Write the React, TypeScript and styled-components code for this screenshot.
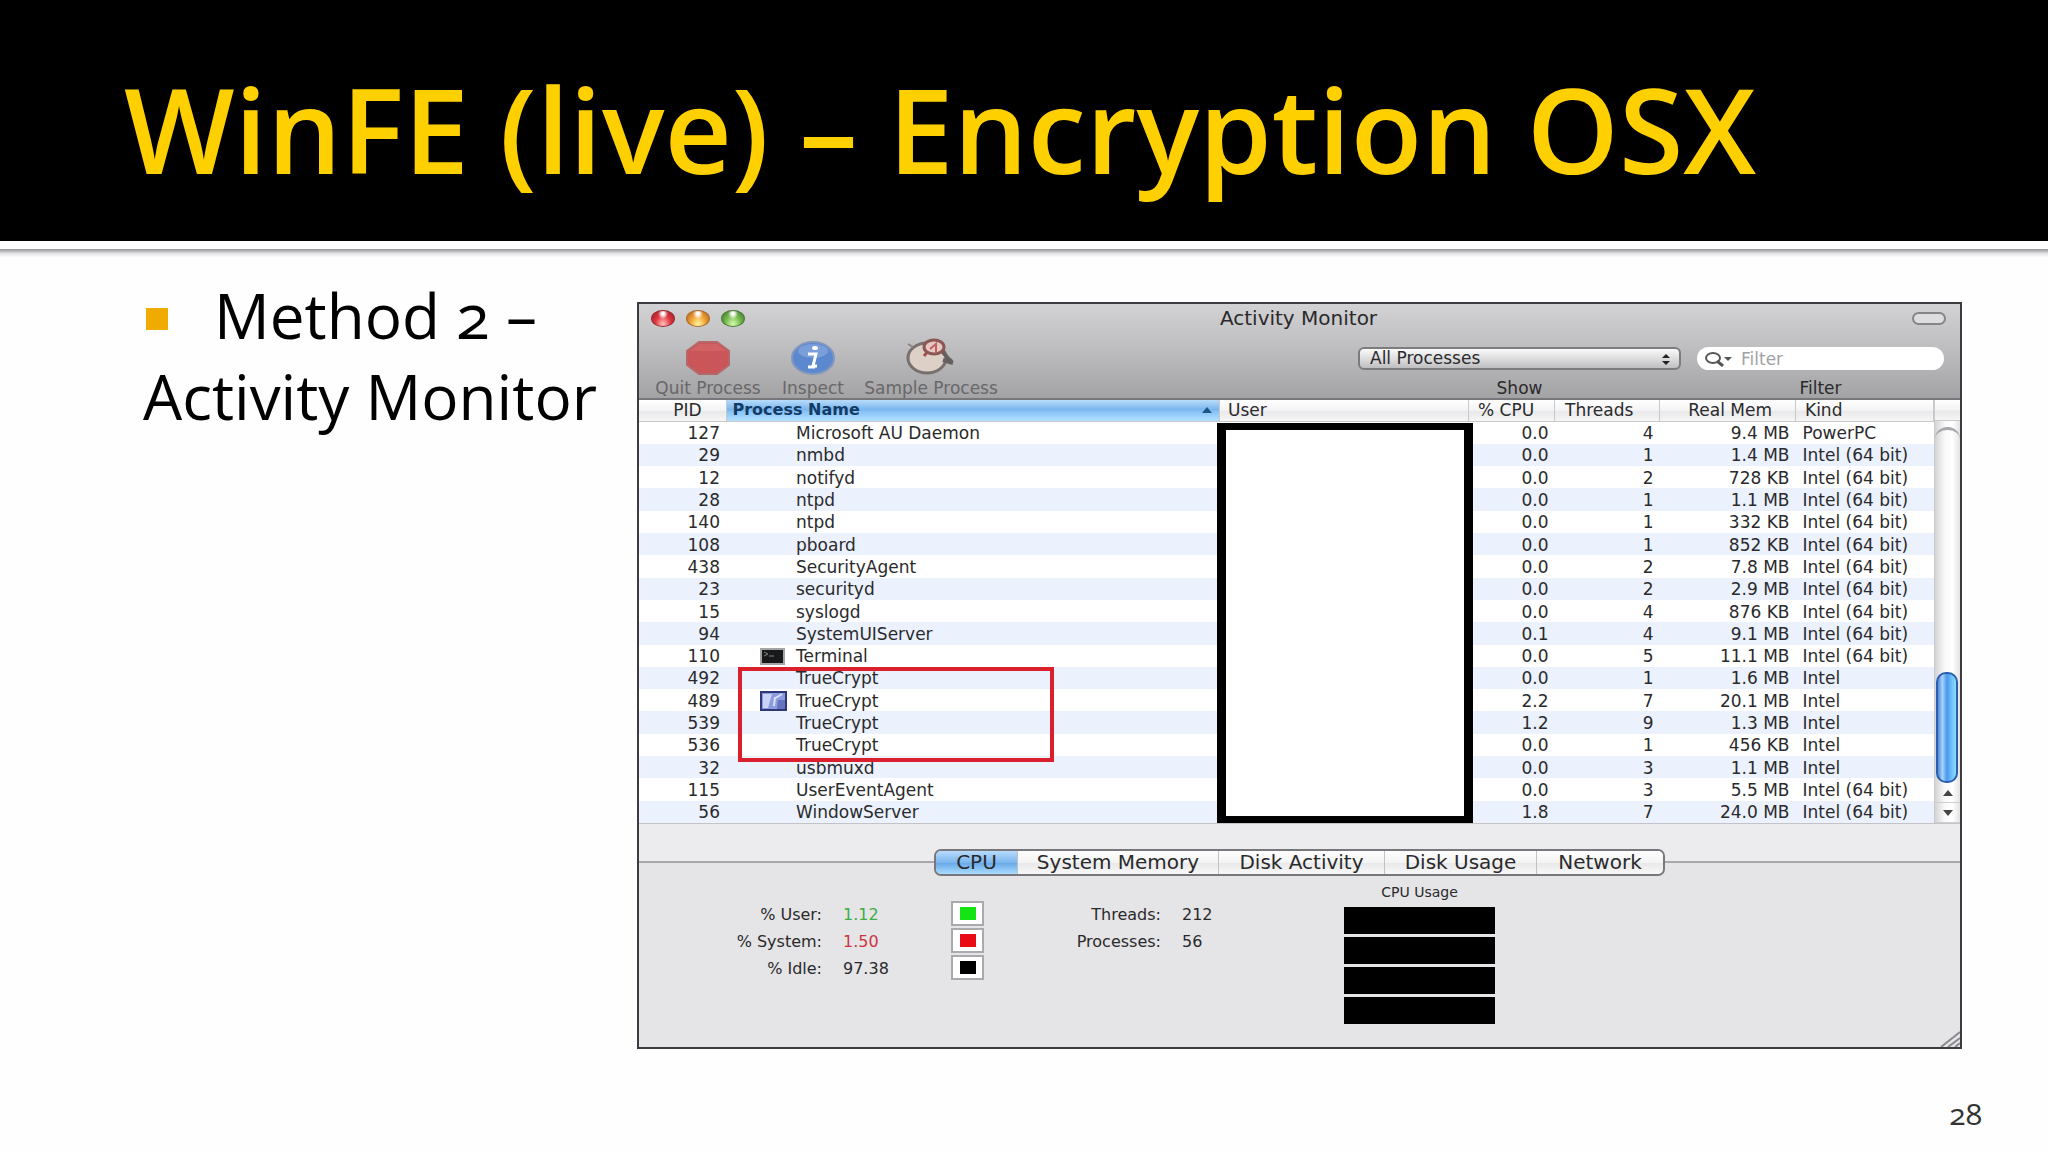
import React from 'react';
import styled, { createGlobalStyle } from 'styled-components';

const slideFont = '"Open Sans", "Noto Sans", sans-serif';
const macFont = '"DejaVu Sans", "Noto Sans", sans-serif';

const GlobalStyle = createGlobalStyle`
  * { box-sizing: border-box; }
  body { margin: 0; background: #fdfdfd; }
  button, input, select { font: inherit; color: inherit; }
`;

const Slide = styled.div`
  min-height: 100vh;
  display: flex;
  flex-direction: column;
  background: #fefefe;
  color: #000;
  font-family: ${slideFont};
  font-variant-numeric: oldstyle-nums;
`;

const SlideHeader = styled.header`
  height: 241px;
  padding: 49px 124px 0;
  background: #000;
  flex: none;
`;

const SlideTitle = styled.h1`
  margin: 0;
  font-size: 117px;
  line-height: 160px;
  font-weight: 600;
  color: #ffd000;
  white-space: nowrap;
`;

const Rule = styled.div`
  height: 16px;
  flex: none;
  background: linear-gradient(#fff 0 8px, #98979b 8px, #b4b3b6 10px, #dedde0 12px, #fefefe 16px);
`;

const SlideBody = styled.main`
  display: flex;
  align-items: flex-start;
  padding: 45px 86px 0 143px;
`;

const Notes = styled.ul`
  flex: none;
  width: 494px;
  margin: 0;
  padding: 0;
  list-style: none;
  font-size: 62px;
  line-height: 81px;
  white-space: nowrap;
`;

const Note = styled.li`
  margin-top: -27px;
`;

const Bullet = styled.span`
  display: inline-block;
  width: 22px;
  height: 22px;
  margin: 0 46px 9px 3px;
  background: #f0ab00;
`;

const PageNumber = styled.footer`
  margin-top: auto;
  padding: 0 66px 17px;
  text-align: right;
  font-size: 30px;
  line-height: 42px;
  color: #333;
`;

const Window = styled.section`
  flex: 1;
  min-width: 0;
  border: 2px solid #3c3c40;
  background: #e5e4e6;
  color: #2a2a2c;
  font-family: ${macFont};
  font-variant-numeric: normal;
  font-size: 17px;
  line-height: 20px;
`;

const Chrome = styled.header`
  background: linear-gradient(#d2d1d3, #bfbec0 45%, #a3a2a4);
  border-bottom: 2px solid #77767a;
`;

const TitleBar = styled.div`
  display: grid;
  grid-template-columns: 1fr auto 1fr;
  align-items: center;
  height: 28px;
  padding: 0 14px 0 12px;
`;

const Lights = styled.div`
  display: flex;
  gap: 11px;
`;

const Light = styled.button<{ $edge: string; $mid: string; $glow: string }>`
  width: 24px;
  height: 17px;
  padding: 0;
  border: 1px solid ${p => p.$edge};
  border-radius: 50%;
  background:
    radial-gradient(ellipse at 50% 18%, #fff 0 8%, transparent 32%),
    radial-gradient(ellipse at 50% 90%, ${p => p.$glow} 8%, ${p => p.$mid} 50%, ${p => p.$edge} 90%);
`;

const WindowTitle = styled.h2`
  margin: 0;
  font-size: 20px;
  line-height: 24px;
  font-weight: 400;
`;

const PillButton = styled.button`
  justify-self: end;
  width: 34px;
  height: 13px;
  padding: 0;
  border: 2px solid #858488;
  border-radius: 7px;
  background: #dddcde;
`;

const Toolbar = styled.div`
  display: flex;
  align-items: flex-end;
  height: 66px;
  padding: 0 16px 0 10px;
`;

const Tool = styled.button<{ $w: number }>`
  display: flex;
  flex-direction: column;
  align-items: center;
  gap: 3px;
  width: ${p => p.$w}px;
  padding: 0;
  border: 0;
  background: none;
  color: #68676a;
  font-size: 17px;
  line-height: 20px;
  white-space: nowrap;
`;

const Fields = styled.div`
  display: flex;
  gap: 16px;
  margin-left: auto;
  text-align: center;
`;

const Field = styled.div<{ $w: number }>`
  display: flex;
  flex-direction: column;
  gap: 8px;
  width: ${p => p.$w}px;
  font-size: 17px;
`;

const SelectWrap = styled.div`
  display: flex;
  align-items: center;
  height: 23px;
  padding-right: 9px;
  border: 2px solid #7c7b7e;
  border-radius: 6px;
  background: linear-gradient(#fafafa, #d8d7d9 60%, #bebdbf);
`;

const ProcessSelect = styled.select`
  flex: 1;
  height: 19px;
  padding: 0 0 0 10px;
  border: 0;
  appearance: none;
  background: none;
  line-height: 19px;
`;

const SearchWrap = styled.div`
  display: flex;
  align-items: center;
  gap: 8px;
  height: 23px;
  padding: 0 12px 0 8px;
  border-radius: 12px;
  background: #fff;
`;

const SearchInput = styled.input`
  flex: 1;
  min-width: 0;
  height: 21px;
  padding: 0;
  border: 0;
  background: none;
  &::placeholder { color: #a3a2a5; opacity: 1; }
`;

const TableArea = styled.div`
  display: flex;
  height: 424px;
  background: #fff;
  border-bottom: 1px solid #c4c4c8;
`;

const TableBox = styled.div`
  position: relative;
  flex: 1;
  min-width: 0;
`;

const ProcessTable = styled.table`
  width: 100%;
  height: 423px;
  border-collapse: collapse;
  table-layout: fixed;
  font-size: 17px;
  line-height: 20px;
`;

const HeadCell = styled.th<{ $align?: string; $pad?: number; $active?: boolean }>`
  height: 21px;
  padding: 0 ${p => (p.$align === 'right' ? p.$pad : 0)}px 0 ${p => (p.$align === 'right' ? 0 : p.$pad ?? 9)}px;
  border-right: 1px solid #c9c8cb;
  border-bottom: 1px solid #c9c8cb;
  background: ${p =>
    p.$active
      ? 'linear-gradient(#b9dcfa, #7ab5ee 45%, #8dc6f8 60%, #b4e0ff)'
      : 'linear-gradient(#fff, #f3f2f4 50%, #e9e8ea 55%, #f6f6f6)'};
  color: ${p => (p.$active ? '#123c66' : '#2a2a2c')};
  font-size: ${p => (p.$active ? 16 : 17)}px;
  font-weight: ${p => (p.$active ? 700 : 400)};
  text-align: ${p => p.$align ?? 'left'};
  white-space: nowrap;
`;

const HeadRow = styled.span`
  display: flex;
  align-items: center;
  justify-content: space-between;
  padding-right: 6px;
`;

const Row = styled.tr`
  &:nth-child(even) { background: #ebf1fd; }
`;

const Cell = styled.td<{ $align?: string; $pad?: number }>`
  padding: 1px ${p => (p.$align === 'right' ? p.$pad ?? 6 : 0)}px 0 ${p => (p.$align === 'right' ? 0 : p.$pad ?? 7)}px;
  text-align: ${p => p.$align ?? 'left'};
  white-space: nowrap;
`;

const NameCell = styled.div`
  display: flex;
  align-items: center;
  height: 20px;
`;

const IconSlot = styled.span`
  display: flex;
  width: 36px;
`;

const Redaction = styled.div`
  position: absolute;
  top: 23px;
  right: 461px;
  bottom: 0;
  width: 256px;
  border: solid #000;
  border-width: 7px 9px;
  background: #fff;
`;

const Highlight = styled.div`
  position: absolute;
  top: 267px;
  left: 99px;
  width: 316px;
  height: 95px;
  border: 4px solid #d9202c;
`;

const ScrollBar = styled.div`
  display: flex;
  flex-direction: column;
  flex: none;
  width: 26px;
  border-left: 1px solid #c9c8cb;
  background: linear-gradient(90deg, #d4d4d7, #fafafa 40%, #fff 70%, #e2e2e4);
`;

const ScrollHead = styled.div`
  height: 21px;
  border-bottom: 1px solid #c9c8cb;
  background: linear-gradient(#fff, #f3f2f4 50%, #e9e8ea 55%, #f6f6f6);
`;

const ScrollTrack = styled.div`
  flex: 1;
  display: flex;
  flex-direction: column;
  justify-content: flex-end;
  margin-top: 6px;
  border-top: 3px solid #a9a8ac;
  border-radius: 12px 12px 0 0;
`;

const ScrollThumb = styled.div`
  height: 111px;
  margin: 0 2px 0 1px;
  border: 2px solid #2b5fae;
  border-radius: 10px;
  background: linear-gradient(90deg, #4c8ce0, #a8d2fb 25%, #4a96ec 50%, #6cc0fa 75%, #8fdcfd);
`;

const ScrollButton = styled.button`
  display: flex;
  align-items: center;
  justify-content: center;
  height: 20px;
  padding: 0;
  border: 0;
  border-bottom: 1px solid #cfced1;
  background: none;
`;

const TabStrip = styled.div`
  display: flex;
  align-items: center;
  height: 76px;
  background: linear-gradient(#ecebed 50%, #e5e4e6 50%);
`;

const TabLine = styled.span`
  flex: 1;
  height: 2px;
  background: #a9a8ab;
`;

const Tabs = styled.div`
  display: flex;
  height: 27px;
  border: 2px solid #78777b;
  border-radius: 7px;
  overflow: hidden;
  font-size: 20px;
`;

const Tab = styled.button<{ $w: number; $on?: boolean }>`
  width: ${p => p.$w}px;
  padding: 0;
  border: 0;
  border-right: 1px solid #c2c1c4;
  background: ${p =>
    p.$on
      ? 'linear-gradient(#b7dbfb, #7db6ef 50%, #68a8e8 52%, #a9dcff)'
      : 'linear-gradient(#fdfdfd, #f4f4f5 50%, #e8e8ea 52%, #f8f8f8)'};
  line-height: 22px;
  white-space: nowrap;
  &:last-child { border-right: 0; }
`;

const Stats = styled.div`
  display: flex;
  height: 147px;
  font-size: 16px;
  line-height: 25px;
`;

const StatList = styled.dl<{ $label: number }>`
  display: grid;
  grid-template-columns: ${p => p.$label}px 108px;
  grid-auto-rows: 25px;
  align-content: start;
  gap: 2px 21px;
  margin: 0;
  padding-top: 2px;
  white-space: nowrap;
`;

const StatLabel = styled.dt`
  text-align: right;
`;

const StatValue = styled.dd<{ $color?: string }>`
  margin: 0;
  color: ${p => p.$color ?? '#2a2a2c'};
`;

const Swatches = styled.div`
  display: flex;
  flex-direction: column;
  gap: 2px;
  padding-top: 1px;
`;

const Swatch = styled.button<{ $color: string }>`
  width: 33px;
  height: 25px;
  padding: 0;
  border: 2px solid #aaa9ad;
  background: linear-gradient(${p => p.$color}, ${p => p.$color}) center / 16px 13px no-repeat #fff;
`;

const UserStats = styled.div`
  display: flex;
`;

const Usage = styled.figure`
  width: 151px;
  margin: 0 0 0 54px;
  text-align: center;
`;

const UsageTitle = styled.figcaption`
  margin-top: -18px;
  font-size: 14px;
  line-height: 20px;
`;

const UsageBars = styled.div`
  display: grid;
  grid-template-rows: repeat(4, 27px);
  gap: 3px;
  margin-top: 5px;
`;

const UsageBar = styled.div`
  background: #000;
`;

const WindowFoot = styled.div`
  display: flex;
  justify-content: flex-end;
  align-items: flex-end;
  flex: 1;
`;

type Proc = [number, string, string, number, string, string, string?];
const I64 = 'Intel (64 bit)';
const processes: Proc[] = [
  [127, 'Microsoft AU Daemon', '0.0', 4, '9.4 MB', 'PowerPC'],
  [29, 'nmbd', '0.0', 1, '1.4 MB', I64],
  [12, 'notifyd', '0.0', 2, '728 KB', I64],
  [28, 'ntpd', '0.0', 1, '1.1 MB', I64],
  [140, 'ntpd', '0.0', 1, '332 KB', I64],
  [108, 'pboard', '0.0', 1, '852 KB', I64],
  [438, 'SecurityAgent', '0.0', 2, '7.8 MB', I64],
  [23, 'securityd', '0.0', 2, '2.9 MB', I64],
  [15, 'syslogd', '0.0', 4, '876 KB', I64],
  [94, 'SystemUIServer', '0.1', 4, '9.1 MB', I64],
  [110, 'Terminal', '0.0', 5, '11.1 MB', I64, 'terminal'],
  [492, 'TrueCrypt', '0.0', 1, '1.6 MB', 'Intel'],
  [489, 'TrueCrypt', '2.2', 7, '20.1 MB', 'Intel', 'truecrypt'],
  [539, 'TrueCrypt', '1.2', 9, '1.3 MB', 'Intel'],
  [536, 'TrueCrypt', '0.0', 1, '456 KB', 'Intel'],
  [32, 'usbmuxd', '0.0', 3, '1.1 MB', 'Intel'],
  [115, 'UserEventAgent', '0.0', 3, '5.5 MB', I64],
  [56, 'WindowServer', '1.8', 7, '24.0 MB', I64],
];

const StopIcon = () => (
  <svg width="46" height="34" viewBox="0 0 46 34">
    <path d="M14 1h18l12 9v14l-12 9H14L2 24V10z" fill="#cb5659" stroke="#b5686a" strokeWidth="2" />
    <path d="M14 3h18l9 7H5z" fill="#dc7375" opacity=".4" />
  </svg>
);

const InfoIcon = () => (
  <svg width="46" height="34" viewBox="0 0 46 34">
    <ellipse cx="23" cy="17" rx="21" ry="16" fill="#5b88cf" stroke="#8297bd" strokeWidth="2" />
    <ellipse cx="23" cy="10" rx="15" ry="7" fill="#8eaee0" opacity=".6" />
    <ellipse cx="25" cy="7" rx="3" ry="2" fill="#fff" />
    <path d="M18 13h8l-3 12h4M18 26h7" fill="none" stroke="#fff" strokeWidth="3" />
  </svg>
);

const SampleIcon = () => (
  <svg width="52" height="37" viewBox="0 0 52 37">
    <ellipse cx="22" cy="20" rx="19" ry="15" fill="#ddd0c6" stroke="#77706f" strokeWidth="3" />
    <path d="M3 6l5 3" stroke="#8b8685" strokeWidth="2" />
    <path d="M37 13c3 3 4 7 10 11M38 22l10 3" fill="none" stroke="#65605f" strokeWidth="4" />
    <path d="M19 18l5-6" stroke="#b04a48" strokeWidth="3" />
    <ellipse cx="29" cy="9" rx="10" ry="7" fill="#e5c7c3" stroke="#8b5654" strokeWidth="3" />
    <path d="M25 11l6-5v8" fill="none" stroke="#c5605d" strokeWidth="2" />
  </svg>
);

const TerminalIcon = () => (
  <svg width="25" height="17" viewBox="0 0 25 17">
    <rect x="1" y="1" width="23" height="15" fill="#17191a" stroke="#a5a5a5" strokeWidth="2" />
    <path d="M4 4l4 2-4 2M9 8h5" fill="none" stroke="#7d8583" />
  </svg>
);

const TrueCryptIcon = () => (
  <svg width="27" height="20" viewBox="0 0 27 20">
    <rect x="1" y="1" width="25" height="18" fill="#8c9ade" stroke="#2d3878" strokeWidth="2" />
    <path d="M3 3h9L8 17H3z" fill="#c9d3f5" />
    <path d="M14 8l8-5M15 6l-1 9" stroke="#dce1fa" strokeWidth="2" />
    <path d="M18 9h7v9h-8z" fill="#5462b4" opacity=".7" />
  </svg>
);

const Triangle = ({ down, color = '#444' }: { down?: boolean; color?: string }) => (
  <svg width="12" height="8" viewBox="0 0 12 8">
    <path d={down ? 'M1 1h10L6 7z' : 'M1 7h10L6 1z'} fill={color} />
  </svg>
);

export default function App() {
  return (
    <Slide>
      <GlobalStyle />
      <SlideHeader>
        <SlideTitle>WinFE (live) – Encryption OSX</SlideTitle>
      </SlideHeader>
      <Rule />
      <SlideBody>
        <Notes>
          <Note>
            <Bullet />Method 2 –<br />Activity Monitor
          </Note>
        </Notes>
        <Window>
          <Chrome>
            <TitleBar>
              <Lights>
                <Light aria-label="Close" $edge="#9c2830" $mid="#e03440" $glow="#ffb0a8" />
                <Light aria-label="Minimize" $edge="#b06c28" $mid="#f0a038" $glow="#ffee90" />
                <Light aria-label="Zoom" $edge="#4a7c34" $mid="#74b850" $glow="#c8f4a0" />
              </Lights>
              <WindowTitle>Activity Monitor</WindowTitle>
              <PillButton aria-label="Toggle toolbar" />
            </TitleBar>
            <Toolbar>
              <Tool $w={118}><StopIcon />Quit Process</Tool>
              <Tool $w={92}><InfoIcon />Inspect</Tool>
              <Tool $w={144}><SampleIcon />Sample Process</Tool>
              <Fields>
                <Field $w={323}>
                  <SelectWrap>
                    <ProcessSelect id="show">
                      <option>All Processes</option>
                    </ProcessSelect>
                    <svg width="8" height="12" viewBox="0 0 8 12">
                      <path d="M0 5l4-4 4 4zM0 8h8l-4 4z" fill="#222" />
                    </svg>
                  </SelectWrap>
                  <label htmlFor="show">Show</label>
                </Field>
                <Field $w={247}>
                  <SearchWrap>
                    <svg width="28" height="16" viewBox="0 0 28 16">
                      <ellipse cx="8" cy="7" rx="7" ry="5" fill="none" stroke="#555" strokeWidth="2" />
                      <path d="M12 10l6 5" stroke="#555" strokeWidth="3" />
                      <path d="M19 6h8l-4 4z" fill="#555" />
                    </svg>
                    <SearchInput id="filter" placeholder="Filter" />
                  </SearchWrap>
                  <label htmlFor="filter">Filter</label>
                </Field>
              </Fields>
            </Toolbar>
          </Chrome>
          <TableArea>
            <TableBox>
              <ProcessTable>
                <colgroup>
                  <col style={{ width: 87 }} />
                  <col />
                  <col style={{ width: 249 }} />
                  <col style={{ width: 86 }} />
                  <col style={{ width: 105 }} />
                  <col style={{ width: 136 }} />
                  <col style={{ width: 138 }} />
                </colgroup>
                <thead>
                  <tr>
                    <HeadCell $align="right" $pad={24}>PID</HeadCell>
                    <HeadCell $active $pad={6}>
                      <HeadRow>Process Name<Triangle color="#1f5484" /></HeadRow>
                    </HeadCell>
                    <HeadCell $pad={8}>User</HeadCell>
                    <HeadCell $pad={9}>% CPU</HeadCell>
                    <HeadCell $pad={10}>Threads</HeadCell>
                    <HeadCell $align="right" $pad={23}>Real Mem</HeadCell>
                    <HeadCell $pad={9}>Kind</HeadCell>
                  </tr>
                </thead>
                <tbody>
                  {processes.map(([pid, name, cpu, threads, mem, kind, icon]) => (
                    <Row key={pid}>
                      <Cell $align="right">{pid}</Cell>
                      <Cell $pad={34}>
                        <NameCell>
                          <IconSlot>
                            {icon === 'terminal' && <TerminalIcon />}
                            {icon === 'truecrypt' && <TrueCryptIcon />}
                          </IconSlot>
                          {name}
                        </NameCell>
                      </Cell>
                      <Cell />
                      <Cell $align="right">{cpu}</Cell>
                      <Cell $align="right">{threads}</Cell>
                      <Cell $align="right">{mem}</Cell>
                      <Cell>{kind}</Cell>
                    </Row>
                  ))}
                </tbody>
              </ProcessTable>
              <Redaction />
              <Highlight />
            </TableBox>
            <ScrollBar>
              <ScrollHead />
              <ScrollTrack>
                <ScrollThumb />
                <ScrollButton aria-label="Scroll up"><Triangle /></ScrollButton>
                <ScrollButton aria-label="Scroll down"><Triangle down /></ScrollButton>
              </ScrollTrack>
            </ScrollBar>
          </TableArea>
          <TabStrip>
            <TabLine />
            <Tabs>
              <Tab $w={82} $on>CPU</Tab>
              <Tab $w={201}>System Memory</Tab>
              <Tab $w={166}>Disk Activity</Tab>
              <Tab $w={152}>Disk Usage</Tab>
              <Tab $w={126}>Network</Tab>
            </Tabs>
            <TabLine />
          </TabStrip>
          <Stats>
            <UserStats>
              <StatList $label={183}>
                <StatLabel>% User:</StatLabel><StatValue $color="#3cae46">1.12</StatValue>
                <StatLabel>% System:</StatLabel><StatValue $color="#cc3440">1.50</StatValue>
                <StatLabel>% Idle:</StatLabel><StatValue>97.38</StatValue>
              </StatList>
              <Swatches>
                <Swatch aria-label="User colour" $color="#14e414" />
                <Swatch aria-label="System colour" $color="#e80c14" />
                <Swatch aria-label="Idle colour" $color="#000" />
              </Swatches>
            </UserStats>
            <StatList $label={177}>
              <StatLabel>Threads:</StatLabel><StatValue>212</StatValue>
              <StatLabel>Processes:</StatLabel><StatValue>56</StatValue>
            </StatList>
            <Usage>
              <UsageTitle>CPU Usage</UsageTitle>
              <UsageBars><UsageBar /><UsageBar /><UsageBar /><UsageBar /></UsageBars>
            </Usage>
            <WindowFoot>
              <svg width="20" height="16" viewBox="0 0 20 16">
                <path d="M1 16L20 1M8 16l12-9M15 16l5-4" stroke="#8a898d" strokeWidth="2" />
              </svg>
            </WindowFoot>
          </Stats>
        </Window>
      </SlideBody>
      <PageNumber>28</PageNumber>
    </Slide>
  );
}
